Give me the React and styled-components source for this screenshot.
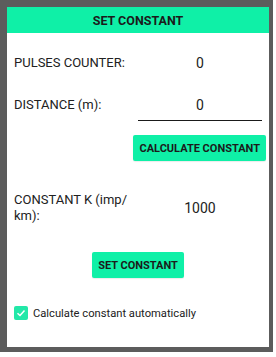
import styled, { createGlobalStyle } from "styled-components";

const GlobalStyle = createGlobalStyle`
    html, body {
        margin: 0;
        padding: 0;
        background: #ffffff;
    }
    body {
        font-family: Roboto, "Liberation Sans", sans-serif;
        color: #212121;
    }
`;

const Page = styled.div`
    width: 276px;
    height: 357px;
    background: #ffffff;
    overflow: hidden;
`;

const Frame = styled.div`
    width: 262px;
    height: 340px;
    border-style: solid;
    border-color: #5c5c5c;
    border-width: 7px 4px 5px 7px;
    background: #ffffff;
    display: flex;
    flex-direction: column;
    overflow: hidden;
`;

const Header = styled.div`
    flex-shrink: 0;
    height: 26px;
    background: #0ff0a7;
    display: flex;
    align-items: center;
    justify-content: center;
    font-weight: 700;
    font-size: 12.5px;
    color: #1b1b1b;
`;

const Body = styled.div`
    padding: 0 7px;
    display: flex;
    flex-direction: column;
`;

const Row = styled.div`
    display: grid;
    grid-template-columns: 124px 124px;
    align-items: center;
    margin-top: ${({top}) => top}px;
    height: ${({h}) => h || 20}px;
`;

const Label = styled.div`
    font-size: 13px;
    line-height: 16px;
    color: #212121;
`;

const Value = styled.div`
    font-size: 14px;
    line-height: 20px;
    text-align: center;
    color: #212121;
`;

const InputValue = styled.div`
    font-size: 14px;
    line-height: 20px;
    text-align: center;
    color: #212121;
    padding-bottom: 5px;
    margin-bottom: -6.5px;
    border-bottom: 1.5px solid #1a1a1a;
`;

const ButtonRow = styled.div`
    display: flex;
    justify-content: ${({align}) => align};
    margin-top: ${({top}) => top}px;
    margin-right: ${({right}) => right || 0}px;
`;

const GreenButton = styled.button`
    height: 26px;
    padding: 0 ${({pad}) => pad}px;
    background: #0ff0a7;
    border: none;
    border-radius: 2px;
    font-family: Roboto, "Liberation Sans", sans-serif;
    font-weight: 700;
    font-size: 11px;
    color: #1b1b1b;
    box-shadow: 0 1px 1px rgba(0, 0, 0, 0.08);
`;

const CheckRow = styled.label`
    display: flex;
    align-items: center;
    gap: 5px;
    height: 16px;
    margin-top: 27px;
    font-size: 11.2px;
    color: #212121;
`;

const Box = styled.span`
    width: 14px;
    height: 14px;
    border-radius: 2px;
    background: #22e8a8;
    display: flex;
    align-items: center;
    justify-content: center;
`;

const App = () => (
    <Page>
        <GlobalStyle />
        <Frame>
            <Header>SET CONSTANT</Header>
            <Body>
                <Row top={20}>
                    <Label>PULSES COUNTER:</Label>
                    <Value>0</Value>
                </Row>
                <Row top={22}>
                    <Label>DISTANCE (m):</Label>
                    <InputValue>0</InputValue>
                </Row>
                <ButtonRow align="flex-end" top={20} right={-4}>
                    <GreenButton pad={6}>CALCULATE CONSTANT</GreenButton>
                </ButtonRow>
                <Row top={31} h={32}>
                    <Label>CONSTANT K (imp/<br />km):</Label>
                    <Value>1000</Value>
                </Row>
                <ButtonRow align="center" top={28}>
                    <GreenButton pad={6}>SET CONSTANT</GreenButton>
                </ButtonRow>
                <CheckRow>
                    <Box>
                        <svg width="10" height="10" viewBox="0 0 10 10">
                            <path d="M1.5 5.2 L4 7.5 L8.5 2.5" fill="none" stroke="#ffffff" strokeWidth="1.5" />
                        </svg>
                    </Box>
                    Calculate constant automatically
                </CheckRow>
            </Body>
        </Frame>
    </Page>
);

export default App;
